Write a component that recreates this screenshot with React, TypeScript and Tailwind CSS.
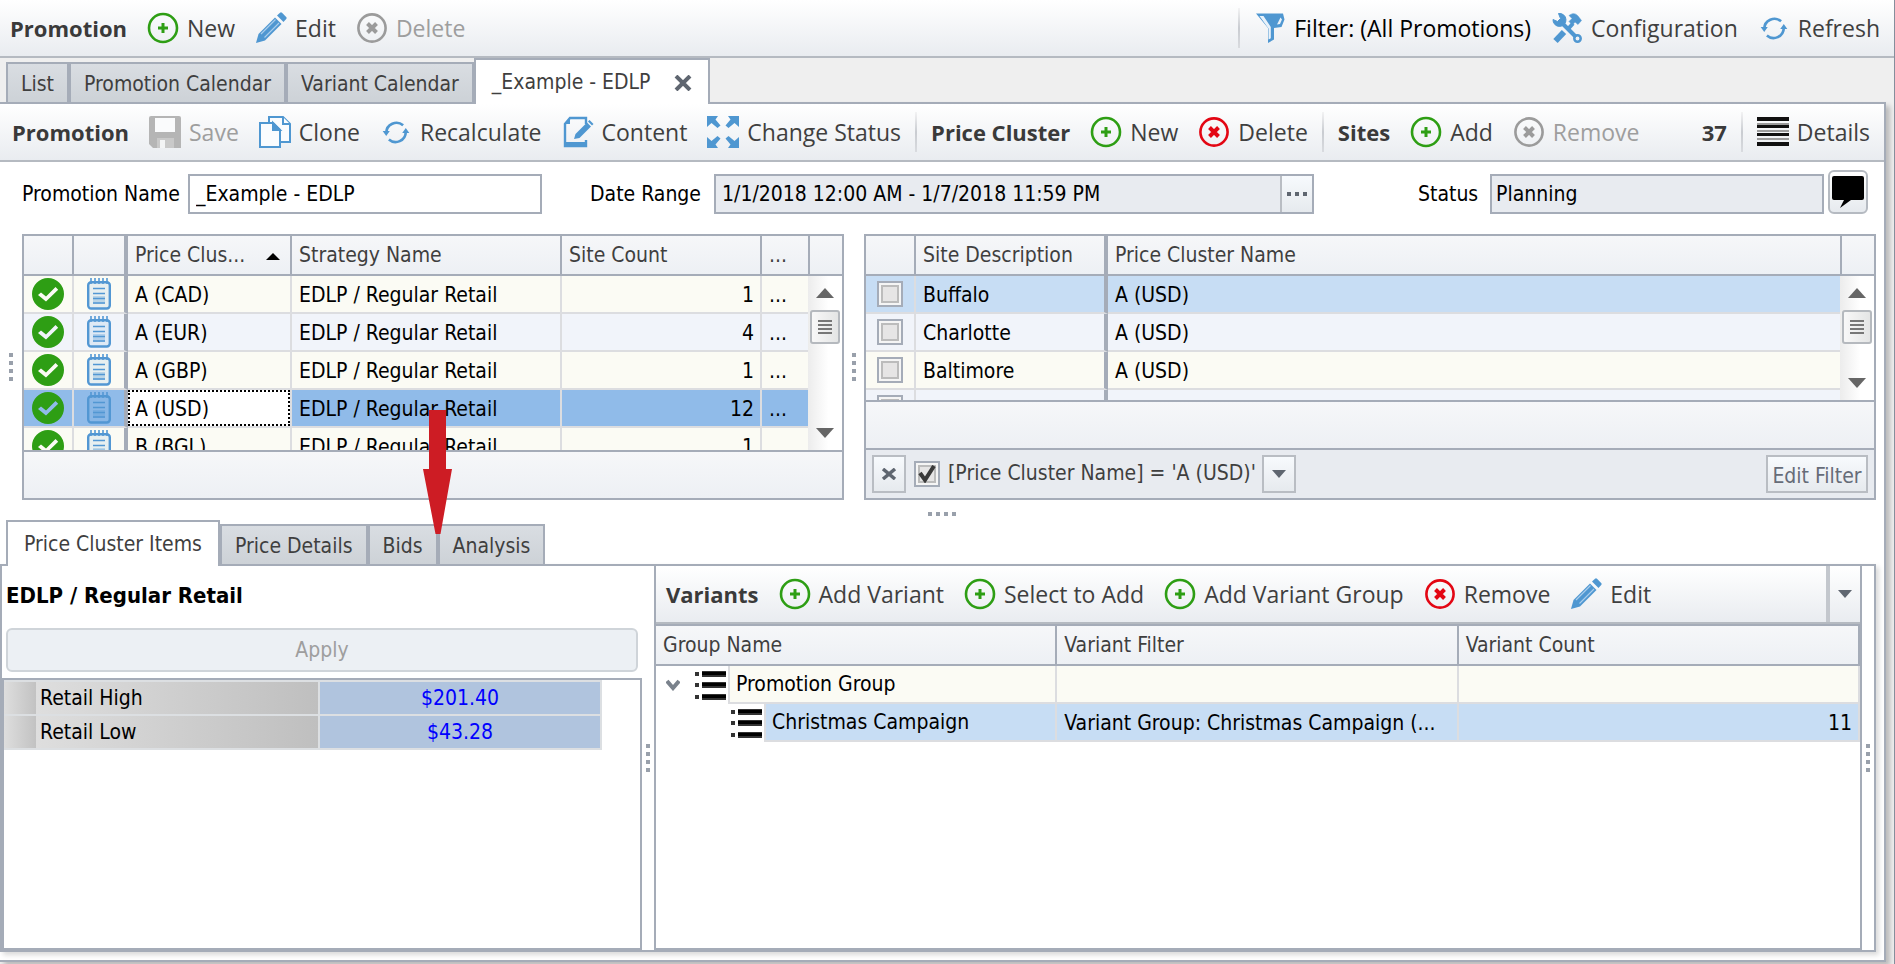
import type { ReactNode } from "react";

const UI = "font-['DejaVu_Sans_Condensed','DejaVu_Sans',sans-serif]";
const BAR = "font-['Open_Sans','Noto_Sans',sans-serif]";

/* ---------- icons ---------- */

function PlusCircle() {
  return (
    <svg className="size-8 shrink-0" viewBox="0 0 32 32" fill="none" stroke="#2e9e14">
      <circle cx="16" cy="16" r="14" strokeWidth="2.6" />
      <path d="M16 11v10M11 16h10" strokeWidth="3" />
    </svg>
  );
}

function CrossCircle({ red = false }: { red?: boolean }) {
  return (
    <svg className="size-8 shrink-0" viewBox="0 0 32 32" fill="none" stroke={red ? "#e30613" : "#9b9b9b"}>
      <circle cx="16" cy="16" r="13.6" strokeWidth="2.6" />
      <path d="M11.5 11.5l9 9M20.5 11.5l-9 9" strokeWidth="4" />
    </svg>
  );
}

function Pencil() {
  return (
    <svg className="size-8 shrink-0" viewBox="0 0 32 32">
      <path d="M1 31l2.5-9L20 5.5l6.5 6.5L10 28.5z" fill="#4f97d1" />
      <path d="M6 22L20.5 7.5M9.500 25.5L24 11" stroke="#a9cdec" strokeWidth="1.2" fill="none" />
      <path d="M22 3.5L25 .8a1.5 1.5 0 0 1 2 0l4.2 4.2a1.5 1.5 0 0 1 0 2L28.5 10z" fill="#4f97d1" />
    </svg>
  );
}

function Funnel() {
  return (
    <svg className="size-8 shrink-0" viewBox="0 0 32 32">
      <path d="M2 1.5h27l1.5 6-3 7.5-7.5 1v11.5l-6 3.5V16z" fill="#4f97d1" />
      <path d="M5.5 4l9 12.5v11l2.3-1.3V15L9.500 4z" fill="#e9f2fa" />
      <path d="M26.5 5.5l-3.5 7 3-.5 2-4.5z" fill="#e9f2fa" />
    </svg>
  );
}

function Tools() {
  return (
    <svg className="size-8 shrink-0" viewBox="0 0 32 32" fill="none" stroke="#4f97d1">
      <path d="M9 9l16 16" strokeWidth="4" />
      <circle cx="26.5" cy="26.5" r="3.2" strokeWidth="2.5" />
      <path d="M7.500 1.5a6.5 6.5 0 1 1-5.5 6l4.5 2 3-3z" fill="#4f97d1" strokeWidth="1" />
      <path d="M22 11.5L17 17" strokeWidth="4" />
      <path d="M13 20l-8.5 9" strokeWidth="6" />
      <path d="M18 3.5c4-3 7-2 9 .5l3.5 4.5-3.5 4-3-2.5-2.5 3-3.5-3.5 3-3z" fill="#4f97d1" strokeWidth=".5" />
    </svg>
  );
}

function Cycle() {
  return (
    <svg className="size-8 shrink-0" viewBox="-2 -2 36 36" fill="none" stroke="#4f97d1" strokeWidth="3">
      <path d="M5 17A11.5 11.5 0 0 1 24 8.500" />
      <path d="M27 16A11.5 11.5 0 0 1 8 24.5" />
      <path d="M1 15h8l-4 5.500zM23 17h8l-4-5.500z" fill="#4f97d1" stroke="none" />
    </svg>
  );
}

function Floppy() {
  return (
    <svg className="size-8 shrink-0" viewBox="0 0 32 32">
      <path d="M2 0h28a2 2 0 0 1 2 2v30H4l-4-4V2a2 2 0 0 1 2-2z" fill="#b5b5b5" />
      <path d="M6 2h20v14H6z" fill="#fafbfc" />
      <path d="M8 22h17v10H8z" fill="#c9c9c9" />
      <path d="M11 24h5v8h-5z" fill="#f3f4f5" />
    </svg>
  );
}

function CopyPages() {
  return (
    <svg className="size-8 shrink-0" viewBox="0 0 32 32" fill="#fafcfe" stroke="#4f97d1" strokeWidth="2">
      <path d="M10 6V1h14l7 7v18h-9" />
      <path d="M24 1v7h7" />
      <path d="M1 7h13l7 7v17H1z" />
      <path d="M14 7v7h7z" fill="#4f97d1" />
    </svg>
  );
}

function NotePencil() {
  return (
    <svg className="size-8 shrink-0" viewBox="0 0 32 32">
      <path d="M24 8V2H8L3 8v22h21v-6" fill="none" stroke="#4f97d1" strokeWidth="2.4" />
      <path d="M8 2v6H3zM3 26h21v4H3z" fill="#4f97d1" />
      <path d="M12 23l1.5-5L25 6.5l4 4L17.5 22z" fill="#4f97d1" />
      <path d="M26 5.5l1.5-1.5 4 4-1.5 1.5z" fill="#4f97d1" />
    </svg>
  );
}

function Expand() {
  return (
    <svg className="size-8 shrink-0" viewBox="0 0 32 32" fill="#4f97d1">
      <path d="M0 0h11L8.500 3.5l5 6-3 2.5-6-5L0 11z" />
      <path d="M32 0H21l2.5 3.5-5 6 3 2.5 6-5L32 11z" />
      <path d="M0 32h11l-2.5-3.5 5-6-3-2.5-6 5L0 21z" />
      <path d="M32 32H21l2.5-3.5-5-6 3-2.5 6 5L32 21z" />
    </svg>
  );
}

function Lines() {
  return (
    <svg className="size-8 shrink-0" viewBox="0 0 32 32">
      <path d="M0 1h32v4H0zM0 9h32v3H0zM0 17h32v3H0zM0 26h32v4H0z" fill="#111" />
      <path d="M0 7h32v2H0zM0 14h32v2H0zM0 22h32v2H0z" fill="#9c9c9c" />
    </svg>
  );
}

function BulletList() {
  return (
    <svg className="size-8 shrink-0" viewBox="0 0 32 32">
      <path d="M1 3h4v4H1zM1 14h4v4H1zM1 26h4v4H1zM8 2h24v6H8zM8 13h24v6H8zM8 25h24v6H8z" fill="#333" />
      <path d="M8 3h24v3H8zM8 14h24v3H8zM8 26h24v3H8z" fill="#000" />
    </svg>
  );
}

function Approved() {
  return (
    <svg className="mx-auto block size-8" viewBox="0 0 32 32">
      <path
        fillRule="evenodd"
        fill="#2e9e14"
        d="M16 0a16 16 0 1 1 0 32a16 16 0 1 1 0-32zM6 17l3-2.500 5 4 9.500-9.500 2.700 2.700L14 23.500z"
      />
    </svg>
  );
}

function Notepad() {
  return (
    <svg className="mx-auto block h-8 w-6" viewBox="0 0 24 32">
      <rect x="1.2" y="4.2" width="21.6" height="26.3" rx="3" fill="#5a9bd5" fillOpacity=".12" stroke="#5297d3" strokeWidth="2.4" />
      <path d="M4 0v6M8 0v6M12 0v6M16 0v6M20 0v6" stroke="#5297d3" strokeWidth="2" strokeOpacity=".8" />
      <path d="M6 10.5h12M6 15.5h12M6 20.5h12M6 25h12" stroke="#5297d3" strokeWidth="1.6" />
      <path d="M6 18h12v8H6z" fill="#5297d3" fillOpacity=".3" />
    </svg>
  );
}

function Triangle({ up = false }: { up?: boolean }) {
  return (
    <svg className="h-[10px] w-[18px]" viewBox="0 0 18 10" fill="#666">
      <path d={up ? "M9 0l9 10H0z" : "M0 0h18L9 10z"} />
    </svg>
  );
}

function SmallDown() {
  return (
    <svg className="h-2 w-3.5" viewBox="0 0 14 8" fill="#5f6670">
      <path d="M0 0h14L7 8z" />
    </svg>
  );
}

/* ---------- shared pieces ---------- */

function BarTitle({ children }: { children: ReactNode }) {
  return <span className="text-[22px] font-bold whitespace-nowrap text-[#3a3a3a]">{children}</span>;
}

function BarButton({ icon, children, disabled = false, dark = false }: {
  icon: ReactNode; children: ReactNode; disabled?: boolean; dark?: boolean;
}) {
  const tone = disabled ? "text-[#9e9e9e]" : dark ? "text-black" : "text-[#3f3f3f]";
  return (
    <button type="button" disabled={disabled} className={`flex items-center gap-2 text-[23px] leading-8 whitespace-nowrap ${tone}`}>
      {icon}
      {children}
    </button>
  );
}

function BarLine() {
  return <span className="-mx-1.5 h-10 w-0.5 shrink-0 bg-linear-to-b from-[#f3f3f4] via-[#c9ccd1] to-[#d9dbdf]" />;
}

function Grip({ row = false }: { row?: boolean }) {
  return (
    <div className={`flex gap-1 ${row ? "" : "flex-col"}`}>
      {[0, 1, 2, 3].map((i) => (
        <span key={i} className="size-1 bg-[#99a0ab]" />
      ))}
    </div>
  );
}

function TabBar({ tabs, active, onClose = false }: { tabs: string[]; active: string; onClose?: boolean }) {
  return (
    <div role="tablist" className={`relative z-10 flex h-11 items-end pl-1.5 text-[21px] text-[#3f3f3f] ${UI}`}>
      {tabs.map((t) =>
        t === active ? (
          <div key={t} className="-mb-0.5 flex h-[46px] items-center border-2 border-b-0 border-[#a5acb8] bg-white px-4 pt-0.5">
            <button type="button" role="tab" aria-selected="true" className="whitespace-nowrap">{t}</button>
            {onClose && (
              <button type="button" aria-label="Close tab" className="ml-6">
                <svg className="h-4 w-[18px]" viewBox="0 0 18 16" stroke="#5f6670" strokeWidth="4">
                  <path d="M2 1l14 14M16 1L2 15" />
                </svg>
              </button>
            )}
          </div>
        ) : (
          <button
            key={t}
            type="button"
            role="tab"
            aria-selected="false"
            className="h-10 border-2 border-b-0 border-[#a5acb8] bg-linear-to-b from-[#d9dde2] to-[#cdd2d7] px-[13px] pt-1 whitespace-nowrap"
          >
            {t}
          </button>
        ),
      )}
    </div>
  );
}

function ScrollColumn() {
  return (
    <div className="flex w-[34px] shrink-0 flex-col">
      <div className="h-10 border-b-2 border-l-2 border-[#a5acb8] bg-linear-to-b from-[#f6f7f9] to-[#edf0f4]" />
      <div className="flex flex-1 flex-col items-center bg-linear-to-r from-[#ececec] to-white to-60% pt-3 pb-3">
        <button type="button" aria-label="Scroll up" className="flex h-[10px]"><Triangle up /></button>
        <div className="mt-3 flex h-[34px] w-[30px] flex-col items-center justify-center gap-0.5 rounded-[3px] border-2 border-[#b5b9be] bg-linear-to-r from-[#f8f8f8] to-[#e4e5e5]">
          <span className="h-0.5 w-3.5 bg-[#777]" />
          <span className="h-0.5 w-3.5 bg-[#777]" />
          <span className="h-0.5 w-3.5 bg-[#777]" />
          <span className="h-0.5 w-3.5 bg-[#777]" />
        </div>
        <button type="button" aria-label="Scroll down" className="mt-auto flex h-[10px]"><Triangle /></button>
      </div>
    </div>
  );
}

const TH = "h-10 border-b-2 border-[#a5acb8] bg-linear-to-b from-[#f6f7f9] to-[#edf0f4] px-0 pt-0.5 pb-0 text-left font-normal text-[#3f3f3f] whitespace-nowrap";
const TD = "h-[38px] border-b-2 border-[#dcdde0] whitespace-nowrap leading-8";
const TEXT = "pr-0 pt-0.5 pb-0 pl-[7px]";
const CHECKBOX =
  "block size-[26px] shrink-0 appearance-none border-2 border-[#a5acb8] bg-[#e6e5e5] shadow-[inset_0_0_0_2px_#f5f5f5,inset_0_0_0_4px_#bcbcbc]";

/* ---------- data ---------- */

const clusters = [
  { name: "A (CAD)", count: 1 },
  { name: "A (EUR)", count: 4 },
  { name: "A (GBP)", count: 1 },
  { name: "A (USD)", count: 12 },
  { name: "B (BGL)", count: 1 },
];
const sites = ["Buffalo", "Charlotte", "Baltimore", "Dallas"];
const prices = [
  ["Retail High", "$201.40"],
  ["Retail Low", "$43.28"],
];

/* ---------- grids ---------- */

function ClusterGrid() {
  return (
    <section className="relative flex w-[822px] shrink-0 flex-col border-2 border-[#a5acb8]">
      <div className="flex h-[214px]">
        <div className="min-w-0 flex-1 overflow-hidden">
          <table className="w-full table-fixed border-separate border-spacing-0">
            <colgroup>
              <col className="w-[50px]" />
              <col className="w-[54px]" />
              <col className="w-[164px]" />
              <col />
              <col className="w-[200px]" />
              <col className="w-[46px]" />
            </colgroup>
            <thead>
              <tr>
                <th className={`${TH} border-r-2`} aria-label="Status" />
                <th className={`${TH} border-r-4`} aria-label="Notes" />
                <th className={`${TH} border-r-2`}>
                  <span className="flex items-center justify-between pr-2.5 pl-[7px]">
                    Price Clus...
                    <svg className="h-[7px] w-3.5" viewBox="0 0 14 7"><path d="M7 0l7 7H0z" /></svg>
                  </span>
                </th>
                <th className={`${TH} border-r-2 pl-[7px]`}>Strategy Name</th>
                <th className={`${TH} border-r-2 pl-[7px]`}>Site Count</th>
                <th className={`${TH} pl-[7px]`}>...</th>
              </tr>
            </thead>
            <tbody>
              {clusters.map((c, i) => {
                const sel = c.name === "A (USD)";
                const bg = sel ? "bg-[#90bbe9]" : i % 2 ? "bg-[#f1f4fa]" : "bg-[#fbfbf4]";
                return (
                  <tr key={c.name} className={bg}>
                    <td className={`${TD} border-r-2 p-0`}><Approved /></td>
                    <td className={`${TD} border-r-4 border-r-[#a5acb8] p-0`}><Notepad /></td>
                    <td className={`${TD} border-r-2 p-0 ${sel ? "bg-white" : ""}`}>
                      <span className={`flex h-9 items-center pt-0.5 pl-[7px] ${sel ? "outline-2 -outline-offset-2 outline-dotted outline-black" : ""}`}>
                        {c.name}
                      </span>
                    </td>
                    <td className={`${TD} ${TEXT} border-r-2`}>EDLP / Regular Retail</td>
                    <td className={`${TD} border-r-2 pt-0.5 pr-1.5 pb-0 pl-0 text-right`}>{c.count}</td>
                    <td className={`${TD} ${TEXT}`}>...</td>
                  </tr>
                );
              })}
            </tbody>
          </table>
        </div>
        <ScrollColumn />
      </div>
      <div className="flex-1 border-t-2 border-[#a5acb8] bg-linear-to-b from-[#f6f7f9] to-[#edf0f4]" />
      <svg className="absolute top-[174px] left-[399px] z-20 h-[124px] w-[30px]" viewBox="0 0 30 124" fill="#cd1c24">
        <path d="M6 0h17v59h6L17.500 124h-5L0 59h6z" />
      </svg>
    </section>
  );
}

function SiteGrid() {
  return (
    <section className="flex min-w-0 flex-1 flex-col border-2 border-[#a5acb8]">
      <div className="flex h-[164px]">
        <div className="min-w-0 flex-1 overflow-hidden">
          <table className="w-full table-fixed border-separate border-spacing-0">
            <colgroup>
              <col className="w-[50px]" />
              <col className="w-[192px]" />
              <col />
            </colgroup>
            <thead>
              <tr>
                <th className={`${TH} border-r-2`} aria-label="Selected" />
                <th className={`${TH} border-r-4 pl-[7px]`}>Site Description</th>
                <th className={`${TH} pl-[7px]`}>Price Cluster Name</th>
              </tr>
            </thead>
            <tbody>
              {sites.map((s, i) => (
                <tr key={s} className={i === 0 ? "bg-[#c7ddf4]" : i % 2 ? "bg-[#f1f4fa]" : "bg-[#fbfbf4]"}>
                  <td className={`${TD} border-r-2 p-0`}>
                    <input type="checkbox" aria-label={s} className={`${CHECKBOX} mx-auto`} />
                  </td>
                  <td className={`${TD} ${TEXT} border-r-4 border-r-[#a5acb8]`}>{s}</td>
                  <td className={`${TD} ${TEXT}`}>A (USD)</td>
                </tr>
              ))}
            </tbody>
          </table>
        </div>
        <ScrollColumn />
      </div>
      <div className="h-12 border-t-2 border-[#a5acb8] bg-linear-to-b from-[#f6f7f9] to-[#edf0f4]" />
      <div className="flex flex-1 items-center border-t-2 border-[#a5acb8] bg-[#e8ebf0] px-1.5 text-[#3f3f3f]">
        <button type="button" aria-label="Clear filter" className="flex h-[38px] w-[34px] items-center justify-center border-2 border-[#b9bdc3] bg-linear-to-b from-[#f7fafd] to-[#e6eaee]">
          <svg className="h-3 w-4" viewBox="0 0 16 12" stroke="#5f6670" strokeWidth="3.500"><path d="M2 1l12 10M14 1L2 11" /></svg>
        </button>
        <label className="ml-2 flex items-center gap-2 whitespace-nowrap">
          <span className="relative">
            <input type="checkbox" defaultChecked className={CHECKBOX} />
            <svg className="pointer-events-none absolute top-1 left-1 size-[18px]" viewBox="0 0 18 18" fill="none" stroke="#3a3a3a" strokeWidth="4">
              <path d="M2 8l5 7L16 1" />
            </svg>
          </span>
          [Price Cluster Name] = 'A (USD)'
        </label>
        <button type="button" aria-label="Recent filters" className="ml-1.5 flex h-[38px] w-[34px] items-center justify-center border-2 border-[#b9bdc3] bg-linear-to-b from-[#f7fafd] to-[#e6eaee]">
          <SmallDown />
        </button>
        <button type="button" className="ml-auto h-[38px] w-[102px] border-2 border-[#b9bdc3] bg-linear-to-b from-[#f7fafd] to-[#e6eaee] pt-1 whitespace-nowrap text-[#666c78]">
          Edit Filter
        </button>
      </div>
    </section>
  );
}

/* ---------- lower panes ---------- */

function PricePane() {
  return (
    <section className="flex w-[640px] shrink-0 flex-col">
      <h2 className="pt-3 pl-1 text-[22px] leading-9 font-bold">EDLP / Regular Retail</h2>
      <button type="button" disabled className="mx-1 mt-3.5 h-11 rounded-md border-2 border-[#cfd4d9] bg-[#ecf0f4] pt-0.5 text-[#9e9e9e]">
        Apply
      </button>
      <div className="mt-1.5 flex-1 border-2 border-b-4 border-[#a5acb8]">
        <table className="border-separate border-spacing-0 border-t-2 border-[#dcdfe2]">
          <tbody>
            {prices.map(([k, v]) => (
              <tr key={k}>
                <td className="h-[34px] w-8 border-b-2 border-[#dcdfe2] bg-linear-to-r from-[#dedede] to-[#c2c2c2] p-0" />
                <th className="h-[34px] w-[284px] border-r-2 border-b-2 border-[#dcdfe2] bg-linear-to-r from-[#dedede] to-[#bfbfbf] py-0 pr-0 pl-1 text-left leading-8 font-normal">{k}</th>
                <td className="h-[34px] w-[282px] border-r-2 border-b-2 border-[#dcdfe2] bg-[#b0c4de] p-0 text-center leading-8 text-[#0000ff]">{v}</td>
              </tr>
            ))}
          </tbody>
        </table>
      </div>
    </section>
  );
}

function VariantPane() {
  const line = "border-[#dcdde0]";
  return (
    <section className="flex min-w-0 flex-1 flex-col border-x-2 border-b-4 border-[#a5acb8]">
      <div className={`flex h-[58px] items-center border-b-2 border-[#b5bac1] bg-linear-to-b from-white to-[#e9ecf0] pl-2.5 ${BAR}`}>
        <div className="flex flex-1 items-center gap-5">
          <BarTitle>Variants</BarTitle>
          <BarButton icon={<PlusCircle />}>Add Variant</BarButton>
          <BarButton icon={<PlusCircle />}>Select to Add</BarButton>
          <BarButton icon={<PlusCircle />}>Add Variant Group</BarButton>
          <BarButton icon={<CrossCircle red />}>Remove</BarButton>
          <BarButton icon={<Pencil />}>Edit</BarButton>
        </div>
        <button type="button" aria-label="More" className="flex h-full w-[34px] items-center justify-center border-l-4 border-[#c3c7cd]">
          <SmallDown />
        </button>
      </div>
      <table className="w-full table-fixed border-separate border-spacing-0 border-t-2 border-[#a5acb8]">
        <thead>
          <tr>
            <th className={`${TH} border-r-2 pl-[7px]`}>Group Name</th>
            <th className={`${TH} border-r-2 pl-[7px]`}>Variant Filter</th>
            <th className={`${TH} border-r-2 pl-[7px]`}>Variant Count</th>
          </tr>
        </thead>
        <tbody>
          <tr>
            <td className="p-0">
              <div className="flex h-[38px]">
                <div className="flex w-[72px] shrink-0 items-center pl-2.5">
                  <button type="button" aria-label="Collapse group">
                    <svg className="h-3 w-3.5" viewBox="0 0 14 12" fill="none" stroke="#7a828c" strokeWidth="4"><path d="M1 2l6 7 6-7" /></svg>
                  </button>
                  <span className="ml-3.5"><BulletList /></span>
                </div>
                <div className={`flex flex-1 items-center border-l-2 border-r-2 border-b-2 ${line} bg-[#fbfbf4] pt-0.5 pl-1.5`}>Promotion Group</div>
              </div>
            </td>
            <td className={`${TD} border-r-2 bg-[#fbfbf4] p-0`} />
            <td className={`${TD} border-r-2 bg-[#fbfbf4] p-0`} />
          </tr>
          <tr>
            <td className="p-0">
              <div className="flex h-[38px]">
                <div className="flex w-[108px] shrink-0 items-center justify-end pr-0.5"><BulletList /></div>
                <div className={`flex flex-1 items-center border-l-2 border-r-2 border-b-2 ${line} bg-[#c7ddf4] pt-0.5 pl-1.5`}>Christmas Campaign</div>
              </div>
            </td>
            <td className={`${TD} ${TEXT} border-r-2 bg-[#c7ddf4]`}>Variant Group: Christmas Campaign (...</td>
            <td className={`${TD} border-r-2 bg-[#c7ddf4] pt-0.5 pr-1.5 pb-0 pl-0 text-right`}>11</td>
          </tr>
        </tbody>
      </table>
    </section>
  );
}

/* ---------- page ---------- */

export default function App() {
  return (
    <div className={`flex min-h-screen flex-col overflow-hidden border-r border-[#858e9c] bg-[#efefef] text-[21px] text-black ${UI}`}>
      <header className={`flex h-[58px] items-center gap-5 border-b-2 border-[#b5bac1] bg-linear-to-b from-white to-[#e9ecf0] pr-3.5 pl-2.5 ${BAR}`}>
        <BarTitle>Promotion</BarTitle>
        <BarButton icon={<PlusCircle />}>New</BarButton>
        <BarButton icon={<Pencil />}>Edit</BarButton>
        <BarButton icon={<CrossCircle />} disabled>Delete</BarButton>
        <div className="ml-auto flex items-center gap-5">
          <BarLine />
          <BarButton icon={<Funnel />} dark>Filter: (All Promotions)</BarButton>
          <BarButton icon={<Tools />}>Configuration</BarButton>
          <BarButton icon={<Cycle />}>Refresh</BarButton>
        </div>
      </header>

      <TabBar tabs={["List", "Promotion Calendar", "Variant Calendar", "_Example - EDLP"]} active="_Example - EDLP" onClose />

      <main className="mr-2 mb-0.5 flex flex-1 flex-col border-t-2 border-r-2 border-b-2 border-[#a5acb8] bg-white shadow-[4px_4px_5px_rgba(0,0,0,0.22)]">
        <div className={`flex h-[58px] items-center gap-5 border-b-2 border-[#b5bac1] bg-linear-to-b from-white to-[#e9ecf0] pr-3.5 pl-3 ${BAR}`}>
          <BarTitle>Promotion</BarTitle>
          <BarButton icon={<Floppy />} disabled>Save</BarButton>
          <BarButton icon={<CopyPages />}>Clone</BarButton>
          <BarButton icon={<Cycle />}>Recalculate</BarButton>
          <BarButton icon={<NotePencil />}>Content</BarButton>
          <BarButton icon={<Expand />}>Change Status</BarButton>
          <BarLine />
          <BarTitle>Price Cluster</BarTitle>
          <BarButton icon={<PlusCircle />}>New</BarButton>
          <BarButton icon={<CrossCircle red />}>Delete</BarButton>
          <BarLine />
          <BarTitle>Sites</BarTitle>
          <BarButton icon={<PlusCircle />}>Add</BarButton>
          <BarButton icon={<CrossCircle />} disabled>Remove</BarButton>
          <div className="ml-auto flex items-center gap-5">
            <BarTitle>37</BarTitle>
            <BarLine />
            <BarButton icon={<Lines />}>Details</BarButton>
          </div>
        </div>

        <form className="flex h-[72px] items-end pr-4 pb-5 pl-[22px] leading-10" onSubmit={(e) => e.preventDefault()}>
          <label htmlFor="promo" className="w-[166px] shrink-0 whitespace-nowrap">Promotion Name</label>
          <input id="promo" defaultValue="_Example - EDLP" className="h-10 w-[354px] border-2 border-[#a5acb8] bg-white px-1.5" />
          <label htmlFor="range" className="ml-12 w-[124px] shrink-0 whitespace-nowrap">Date Range</label>
          <div className="flex h-10 w-[600px] border-2 border-[#a5acb8] bg-[#e8ebf0]">
            <input id="range" readOnly value="1/1/2018 12:00 AM - 1/7/2018 11:59 PM" className="min-w-0 flex-1 bg-transparent px-1.5" />
            <button type="button" aria-label="Choose dates" className="flex w-8 items-center justify-center gap-1 border-l-2 border-[#b9bdc3] bg-linear-to-b from-[#f7fafd] to-[#e6eaee]">
              <span className="size-1 bg-[#5f6670]" />
              <span className="size-1 bg-[#5f6670]" />
              <span className="size-1 bg-[#5f6670]" />
            </button>
          </div>
          <label htmlFor="status" className="ml-auto w-[72px] shrink-0 whitespace-nowrap">Status</label>
          <input id="status" readOnly value="Planning" className="h-10 w-[334px] border-2 border-[#a5acb8] bg-[#e8ebf0] px-1" />
          <button type="button" aria-label="Comments" className="ml-1 flex h-11 w-10 items-center justify-center rounded-md border-2 border-[#b5bac1] bg-linear-to-b from-white to-[#e6eaee]">
            <svg className="size-8" viewBox="0 0 32 32"><path d="M2 0h28a2 2 0 0 1 2 2v20a2 2 0 0 1-2 2H19L8 32l4-8H2a2 2 0 0 1-2-2V2a2 2 0 0 1 2-2z" /></svg>
          </button>
        </form>

        <div className="flex h-[266px] pr-2">
          <div className="flex w-[22px] shrink-0 items-center justify-center"><Grip /></div>
          <ClusterGrid />
          <div className="flex w-5 shrink-0 items-center justify-center"><Grip /></div>
          <SiteGrid />
        </div>

        <div className="flex h-5 justify-center pt-3"><Grip row /></div>

        <TabBar tabs={["Price Cluster Items", "Price Details", "Bids", "Analysis"]} active="Price Cluster Items" />

        <div className="mr-2 mb-2 flex flex-1 border-2 border-b-0 border-[#a5acb8] bg-white shadow-[3px_3px_5px_rgba(0,0,0,0.15)]">
          <PricePane />
          <div className="flex w-3 shrink-0 justify-center border-b-2 border-[#a5acb8] pt-[178px]"><Grip /></div>
          <VariantPane />
          <div className="flex w-3 shrink-0 justify-center border-b-2 border-[#a5acb8] pt-[178px]"><Grip /></div>
        </div>
      </main>
    </div>
  );
}
